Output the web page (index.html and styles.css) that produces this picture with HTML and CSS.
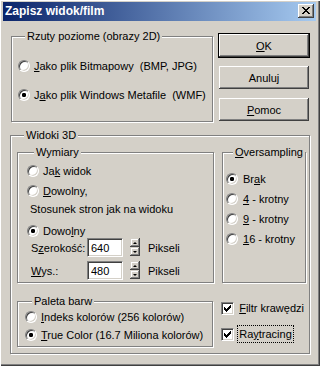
FILE: index.html
```html
<!DOCTYPE html>
<html lang="pl">
<head>
    <meta charset="UTF-8">
    <title>Zapisz widok/film</title>
    <link rel="stylesheet" href="styles.css">
</head>
<body>
    <div class="window">
        <div class="titlebar">
            <span class="title">Zapisz widok/film</span>
            <button class="close" aria-label="Zamknij">
                <svg width="8" height="7" viewBox="0 0 8 7" shape-rendering="crispEdges"><path fill="#000" d="M0 0h2v1H0zM6 0h2v1H6zM1 1h2v1H1zM5 1h2v1H5zM2 2h4v1H2zM3 3h2v1H3zM2 4h4v1H2zM1 5h2v1H1zM5 5h2v1H5zM0 6h2v1H0zM6 6h2v1H6z"/></svg>
            </button>
        </div>

        <div class="client">
            <div class="top-row">
                <fieldset class="group rzuty">
                    <legend>Rzuty poziome (obrazy 2D)</legend>
                    <label class="opt"><input type="radio" name="rzut"><span><u>J</u>ako plik Bitmapowy&nbsp; (BMP, JPG)</span></label>
                    <label class="opt"><input type="radio" name="rzut" checked><span>J<u>a</u>ko plik Windows Metafile&nbsp; (WMF)</span></label>
                </fieldset>

                <div class="buttons">
                    <button class="btn default"><u>O</u>K</button>
                    <button class="btn">Anuluj</button>
                    <button class="btn"><u>P</u>omoc</button>
                </div>
            </div>

            <fieldset class="group widoki">
                <legend>Widoki 3D</legend>

                <div class="row">
                    <fieldset class="group wymiary">
                        <legend>Wymiary</legend>
                        <label class="opt"><input type="radio" name="wym"><span>Ja<u>k</u> widok</span></label>
                        <label class="opt"><input type="radio" name="wym"><span><u>D</u>owolny,</span></label>
                        <div class="note">Stosunek stron jak na widoku</div>
                        <label class="opt"><input type="radio" name="wym" checked><span>Dowo<u>l</u>ny</span></label>
                        <div class="size">
                            <label class="size-label">S<u>z</u>erokość:</label>
                            <input type="text" value="640">
                            <span class="spin"><span class="spin-btn up"></span><span class="spin-btn down"></span></span>
                            <span class="unit">Pikseli</span>
                        </div>
                        <div class="size">
                            <label class="size-label"><u>W</u>ys.:</label>
                            <input type="text" value="480">
                            <span class="spin"><span class="spin-btn up"></span><span class="spin-btn down"></span></span>
                            <span class="unit">Pikseli</span>
                        </div>
                    </fieldset>

                    <fieldset class="group oversampling">
                        <legend><u>O</u>versampling</legend>
                        <label class="opt"><input type="radio" name="over" checked><span>Br<u>a</u>k</span></label>
                        <label class="opt"><input type="radio" name="over"><span><u>4</u> - krotny</span></label>
                        <label class="opt"><input type="radio" name="over"><span><u>9</u> - krotny</span></label>
                        <label class="opt"><input type="radio" name="over"><span><u>1</u>6 - krotny</span></label>
                    </fieldset>
                </div>

                <div class="row">
                    <fieldset class="group paleta">
                        <legend>Paleta barw</legend>
                        <label class="opt"><input type="radio" name="paleta"><span><u>I</u>ndeks kolorów (256 kolorów)</span></label>
                        <label class="opt"><input type="radio" name="paleta" checked><span><u>T</u>rue Color (16.7 Miliona kolorów)</span></label>
                    </fieldset>

                    <div class="checks">
                        <label class="chk"><input type="checkbox" checked><span><u>F</u>iltr krawędzi</span></label>
                        <label class="chk focus"><input type="checkbox" checked><span>Ra<u>y</u>tracing</span></label>
                    </div>
                </div>
            </fieldset>
        </div>
    </div>
</body>
</html>
```

FILE: styles.css
```css
/* Reset */
* { box-sizing: border-box; }

body {
    margin: 0;
    background: #d4d0c8;
    font: 11px/14px "Liberation Sans", Arial, sans-serif;
    color: #000;
}

u { text-underline-offset: 1px; }

/* Fenetre */
.window {
    width: 320px;
    height: 366px;
    padding: 2px 4px 0 3px;
    background: #d4d0c8;
    box-shadow: inset 1px 1px #fff, inset -1px -1px #404040, inset -2px -2px #808080;
}

.titlebar {
    height: 19px;
    padding: 0 2px;
    display: flex;
    justify-content: space-between;
    align-items: flex-start;
    background: linear-gradient(to right, #0a246a, #a6caf0);
    color: #fff;
}

.title {
    font-weight: bold;
    font-size: 12px;
    line-height: 18px;
}

.close {
    margin-top: 2px;
    width: 16px;
    height: 14px;
    padding: 3px 0 0 4px;
    border: none;
    background: #d4d0c8;
    box-shadow: inset -1px -1px #404040, inset 1px 1px #fff, inset -2px -2px #808080;
    display: flex;
    align-items: flex-start;
}

.close svg { display: block; }

/* Zawartosc */
.client {
    padding: 9px 0 0 7px;
}

.top-row {
    display: flex;
    align-items: flex-start;
}

.row { display: flex; align-items: stretch; }

/* Group box */
.group {
    margin: 0;
    padding: 0;
    min-width: 0;
    border: 1px solid #808080;
    box-shadow: inset 1px 1px #fff, 1px 1px #fff;
}

.group legend {
    margin-left: 7px;
    padding: 0 2px;
    line-height: 13px;
    background: #d4d0c8;
}

.rzuty {
    margin-left: 1px;
    width: 202px;
    padding: 16px 0 19px 6px;
}

.rzuty .opt + .opt { margin-top: 15px; }

.widoki {
    margin-top: 7px;
    width: 300px;
    padding: 4px 3px 6px 6px;
}

.wymiary {
    width: 197px;
    padding: 5px 0 2px 9px;
}

.wymiary .opt:nth-of-type(2) { margin-top: 6px; }
.wymiary .note { margin-top: 4px; padding-left: 3px; }
.wymiary .opt:nth-of-type(3) { margin-top: 8px; }
.wymiary .size + .size { margin-top: 4px; }

.oversampling {
    margin-left: 8px;
    width: 84px;
    padding: 13px 0 0 3px;
}

.oversampling .opt { gap: 5px; }
.oversampling .opt + .opt { margin-top: 6px; }

.row + .row { margin-top: 12px; }

.paleta {
    width: 197px;
    padding: 2px 0 4px 7px;
}

.paleta .opt + .opt { margin-top: 4px; }

/* Radio */
.opt {
    display: flex;
    align-items: center;
    gap: 4px;
    height: 14px;
    white-space: nowrap;
}

.opt input {
    appearance: none;
    margin: 0;
    flex: none;
    width: 12px;
    height: 12px;
    border-radius: 50%;
    border: 1px solid;
    border-color: #808080 #fff #fff #808080;
    box-shadow: inset 1px 1px #404040, inset -1px -1px #d4d0c8;
    background: #fff;
}

.opt input:checked {
    background: radial-gradient(circle at center, #000 0 2px, #fff 2.3px);
}

/* Szerokosc / Wysokosc */
.size {
    display: flex;
    align-items: center;
    height: 19px;
    padding-left: 4px;
}

.size-label { width: 56px; }

.size input {
    width: 36px;
    height: 19px;
    margin: 0;
    padding: 0 0 0 3px;
    font: inherit;
    color: #000;
    background: #fff;
    border: 1px solid;
    border-color: #808080 #fff #fff #808080;
    box-shadow: inset 1px 1px #404040, inset -1px -1px #d4d0c8;
    outline: none;
}

.spin {
    align-self: flex-start;
    margin-left: 7px;
    width: 10px;
    display: flex;
    flex-direction: column;
}

.spin-btn {
    height: 9px;
    background: #d4d0c8;
    box-shadow: inset -1px -1px #404040, inset 1px 1px #d4d0c8, inset -2px -2px #808080, inset 2px 2px #fff;
    display: flex;
    justify-content: center;
    align-items: center;
}

.spin-btn::after {
    content: "";
    width: 0;
    height: 0;
    border-left: 2px solid transparent;
    border-right: 2px solid transparent;
}

.spin-btn.up::after { border-bottom: 2px solid #000; }
.spin-btn.down::after { border-top: 2px solid #000; }

.unit { margin-left: 8px; }

/* Przyciski */
.buttons {
    margin-left: 6px;
    padding-top: 4px;
    display: flex;
    flex-direction: column;
    gap: 9px;
}

.btn {
    width: 90px;
    height: 23px;
    padding: 0;
    font: inherit;
    color: #000;
    border: none;
    background: #d4d0c8;
    box-shadow: inset -1px -1px #404040, inset 1px 1px #fff, inset -2px -2px #808080;
}

.btn.default {
    margin: -1px;
    width: 92px;
    height: 25px;
    border: 1px solid #000;
}

/* Checkboxy */
.checks {
    margin-left: 8px;
    padding-top: 4px;
    display: flex;
    flex-direction: column;
    gap: 8px;
}

.chk {
    display: flex;
    align-items: center;
    height: 18px;
    white-space: nowrap;
}

.chk input {
    appearance: none;
    margin: 0 3px 0 0;
    flex: none;
    width: 13px;
    height: 13px;
    border: 1px solid;
    border-color: #808080 #fff #fff #808080;
    box-shadow: inset 1px 1px #404040, inset -1px -1px #d4d0c8;
    background: #fff;
}

.chk input:checked {
    background: #fff url("data:image/svg+xml,%3Csvg xmlns='http://www.w3.org/2000/svg' width='7' height='7' shape-rendering='crispEdges'%3E%3Cpath d='M6 0h1v1H6zM5 1h2v1H5zM0 2h1v1H0zM4 2h3v1H4zM0 3h2v1H0zM3 3h3v1H3zM0 4h5v1H0zM1 5h3v1H1zM2 6h1v1H2z'/%3E%3C/svg%3E") 2px 2px no-repeat;
}

.chk span {
    padding: 1px 1px;
    border: 1px dotted transparent;
}

.chk.focus span { border-color: #000; }
```
